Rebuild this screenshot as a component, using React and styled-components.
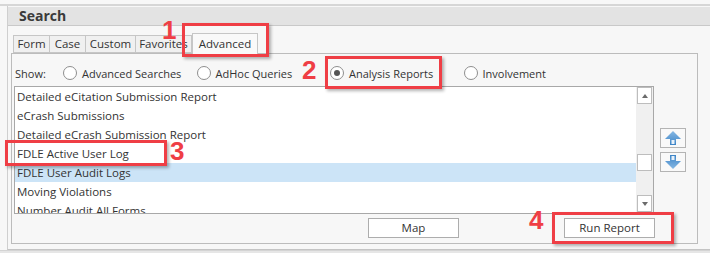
import React from 'react';
import styled, { createGlobalStyle } from 'styled-components';

const Global = createGlobalStyle`
  html, body { margin: 0; padding: 0; background: #f7f7f7; }
  body { font-family: "Segoe UI", "Open Sans", "Noto Sans", sans-serif; color: #333; }
  * { box-sizing: border-box; }
`;

const Page = styled.div`
  position: relative;
  width: 710px;
  height: 253px;
  overflow: hidden;
  background: #f7f7f7;
  padding-top: 4px;
`;

const TopRule = styled.div`
  height: 2px;
  background: #d6d6d6;
`;

const Outer = styled.div`
  margin-left: 7px;
  border-left: 1px solid #cfcfcf;
  border-bottom: 1px solid #c4c4c4;
  padding-top: 1px;
  padding-bottom: 5px;
`;

const Header = styled.div`
  height: 19px;
  background: #e3e3e3;
  border-bottom: 1px solid #c9c9c9;
  padding-left: 11px;
  font-weight: 700;
  font-size: 14px;
  line-height: 18px;
  color: #3a3a3a;
`;

const Body = styled.div`
  padding: 7px 0 0 3px;
`;

const TabStrip = styled.div`
  display: flex;
  align-items: flex-end;
  height: 20px;
  margin-left: 2px;
  position: relative;
  z-index: 1;
`;

const Tab = styled.div`
  width: ${p => p.$w}px;
  height: ${p => (p.$active ? 21 : 18)}px;
  margin-bottom: ${p => (p.$active ? -1 : 0)}px;
  border: 1px solid #c6c6c6;
  border-left-width: ${p => (p.$first || p.$active ? 1 : 0)}px;
  border-bottom: ${p => (p.$active ? 'none' : '1px solid #c6c6c6')};
  background: ${p => (p.$active ? '#f9f9f9' : '#f0f0f0')};
  font-size: 11.5px;
  line-height: ${p => (p.$active ? 19 : 16)}px;
  text-align: center;
  color: #333;
  white-space: nowrap;
  overflow: hidden;
`;

const TabPage = styled.div`
  width: 687px;
  height: 191px;
  border: 1px solid #bcbcbc;
  background: #f7f7f7;
  display: flex;
  flex-direction: column;
`;

const ShowRow = styled.div`
  display: grid;
  grid-template-columns: 48px repeat(4, 133.5px);
  align-items: center;
  height: 26px;
  margin-top: 6px;
  padding-left: 3px;
  font-size: 11px;
`;

const Radio = styled.label`
  display: flex;
  align-items: center;
  gap: 5px;
  white-space: nowrap;
`;

const Circle = styled.span`
  width: 14px;
  height: 14px;
  border-radius: 50%;
  border: 1px solid #8e8e8e;
  background: #fff;
  display: flex;
  align-items: center;
  justify-content: center;
  &::after {
    content: '';
    width: 6px;
    height: 6px;
    border-radius: 50%;
    background: ${p => (p.$on ? '#555' : 'transparent')};
  }
`;

const ListRow = styled.div`
  display: flex;
  align-items: flex-start;
  margin-left: 2px;
`;

const ListBox = styled.div`
  width: 640px;
  height: 128px;
  border: 1px solid #a8a8a8;
  background: #fff;
  display: flex;
  overflow: hidden;
`;

const Items = styled.div`
  flex: 1;
  overflow: hidden;
`;

const Item = styled.div`
  height: 19px;
  line-height: 19px;
  padding-left: 2px;
  font-size: 11.5px;
  color: #333;
  white-space: nowrap;
  background: ${p => (p.$sel ? '#cce4f7' : 'transparent')};
`;

const ScrollBar = styled.div`
  width: 17px;
  background: #f0f0f0;
  display: flex;
  flex-direction: column;
  align-items: center;
  padding-bottom: 1px;
`;

const ScrollBtn = styled.div`
  width: 15px;
  height: 17px;
  background: #fff;
  border: 1px solid #bdbdbd;
  display: flex;
  align-items: center;
  justify-content: center;
  margin-top: ${p => p.$mt || 0};
`;

const Arrow = styled.span`
  width: 0;
  height: 0;
  border-left: 3.5px solid transparent;
  border-right: 3.5px solid transparent;
  ${p => (p.$down ? 'border-top: 4px solid #6b6b6b;' : 'border-bottom: 4px solid #6b6b6b;')}
`;

const SideCol = styled.div`
  display: flex;
  flex-direction: column;
  gap: 4px;
  margin: 42px 0 0 6px;
`;

const SideBtn = styled.div`
  width: 26px;
  height: 20px;
  border: 1px solid #b4b4b4;
  background: #f9f9f9;
  display: flex;
  align-items: center;
  justify-content: center;
`;

const ButtonRow = styled.div`
  display: flex;
  gap: 105px;
  margin-top: 4px;
  padding-left: 356px;
`;

const Button = styled.div`
  width: 91px;
  height: 20px;
  border: 1px solid #adadad;
  background: #fff;
  font-size: 11.5px;
  line-height: 18px;
  text-align: center;
  color: #333;
`;

const BottomBar = styled.div`
  height: 4px;
  background: #e6e6e6;
  border-top: 1px solid #d4d4d4;
`;

const Callout = styled.div`
  position: absolute;
  left: ${p => p.$x}px;
  top: ${p => p.$y}px;
  width: ${p => p.$w}px;
  height: ${p => p.$h}px;
  border: 3px solid #ef3e45;
  box-shadow: 2px 2px 3px rgba(0, 0, 0, 0.3);
  z-index: 5;
  pointer-events: none;
`;

const Num = styled.div`
  position: absolute;
  left: ${p => p.$x}px;
  top: ${p => p.$y}px;
  font-family: "Liberation Sans", Arial, sans-serif;
  font-weight: 700;
  font-size: 26px;
  line-height: 26px;
  color: #ef3e45;
  z-index: 6;
`;

const BlueArrow = ({ down }) => (
  <svg width="18" height="16" viewBox="0 0 18 16" style={down ? { transform: 'rotate(180deg)' } : undefined}>
    <defs>
      <linearGradient id={down ? 'gd' : 'gu'} x1="0" y1="0" x2="0" y2="1">
        <stop offset="0" stopColor="#86b8e4" />
        <stop offset="1" stopColor="#3d84c6" />
      </linearGradient>
    </defs>
    <path d="M9 1 L17 9 L12 9 L12 15 L6 15 L6 9 L1 9 Z" fill={`url(#${down ? 'gd' : 'gu'})`} />
    <rect x="7.5" y="10" width="3" height="4" fill="#e8f1fa" />
  </svg>
);

const items = [
  'Detailed eCitation Submission Report',
  'eCrash Submissions',
  'Detailed eCrash Submission Report',
  'FDLE Active User Log',
  'FDLE User Audit Logs',
  'Moving Violations',
  'Number Audit All Forms',
];

const tabs = [
  { label: 'Form', w: 37 },
  { label: 'Case', w: 36 },
  { label: 'Custom', w: 50 },
  { label: 'Favorites', w: 56 },
  { label: 'Advanced', w: 66, active: true },
];

const radios = [
  { label: 'Advanced Searches' },
  { label: 'AdHoc Queries' },
  { label: 'Analysis Reports', on: true },
  { label: 'Involvement' },
];

export default function App() {
  return (
    <Page>
      <Global />
      <TopRule />
      <Outer>
        <Header>Search</Header>
        <Body>
          <TabStrip>
            {tabs.map((t, i) => (
              <Tab key={t.label} $w={t.w} $active={t.active} $first={i === 0}>
                {t.label}
              </Tab>
            ))}
          </TabStrip>
          <TabPage>
            <ShowRow>
              <span>Show:</span>
              {radios.map(r => (
                <Radio key={r.label}>
                  <Circle $on={r.on} />
                  {r.label}
                </Radio>
              ))}
            </ShowRow>
            <ListRow>
              <ListBox>
                <Items>
                  {items.map((it, i) => (
                    <Item key={it} $sel={i === 4}>{it}</Item>
                  ))}
                </Items>
                <ScrollBar>
                  <ScrollBtn><Arrow /></ScrollBtn>
                  <ScrollBtn $mt="50px" />
                  <ScrollBtn $mt="auto"><Arrow $down /></ScrollBtn>
                </ScrollBar>
              </ListBox>
              <SideCol>
                <SideBtn><BlueArrow /></SideBtn>
                <SideBtn><BlueArrow down /></SideBtn>
              </SideCol>
            </ListRow>
            <ButtonRow>
              <Button>Map</Button>
              <Button>Run Report</Button>
            </ButtonRow>
          </TabPage>
        </Body>
      </Outer>
      <BottomBar />

      <Callout $x={182} $y={23} $w={87} $h={34} />
      <Num $x={162} $y={17}>1</Num>
      <Callout $x={325} $y={56} $w={117} $h={33} />
      <Num $x={302} $y={57}>2</Num>
      <Callout $x={5} $y={140} $w={162} $h={26} />
      <Num $x={170} $y={138}>3</Num>
      <Callout $x={552} $y={212} $w={122} $h={32} />
      <Num $x={529} $y={207}>4</Num>
    </Page>
  );
}
